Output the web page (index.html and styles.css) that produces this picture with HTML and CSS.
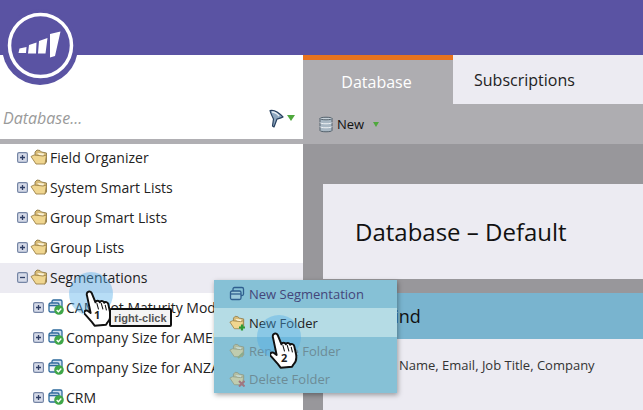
FILE: index.html
```html
<!DOCTYPE html>
<html lang="en">
  <head>
    <meta charset="utf-8" />
    <title>Database</title>
    <link rel="stylesheet" href="styles.css">
  </head>
  <body>
    <svg class="defs" width="0" height="0">
      <defs>
        <symbol id="plus" viewBox="0 0 11 11">
          <rect x=".6" y=".6" width="9.800" height="9.800" rx="1.500" fill="#d5dae8" stroke="#7585a5" stroke-width="1.200"/>
          <path d="M3 5.500h5M5.500 3v5" stroke="#2f3f66" stroke-width="1.300"/>
        </symbol>
        <symbol id="minus" viewBox="0 0 11 11">
          <rect x=".6" y=".6" width="9.800" height="9.800" rx="1.500" fill="#d5dae8" stroke="#7585a5" stroke-width="1.200"/>
          <path d="M3 5.500h5" stroke="#2f3f66" stroke-width="1.300"/>
        </symbol>
        <symbol id="folder" viewBox="0 0 18 16">
          <path d="M5 6V3l2-2 3 .5 1.500 1.500 5 1v9l-2 2z" fill="#d8bc78" stroke="#8f7a4a" stroke-width=".9"/>
          <path d="M7 4l7 .5-1 5z" fill="#fbf3d9"/>
          <path d="M1 7.500l3-1.500 9 1 3.500-1-1.500 9H6z" fill="#f0d690" stroke="#9c8248" stroke-width=".9" stroke-linejoin="round"/>
        </symbol>
        <symbol id="seg" viewBox="0 0 16 16">
          <rect x="4" y="1" width="10" height="8" rx="1.500" fill="#cfe0f0" stroke="#2d6a9c" stroke-width="1.300"/>
          <rect x="1" y="4" width="10" height="9" rx="1.500" fill="#eef4fa" stroke="#2d6a9c" stroke-width="1.300"/>
          <path d="M1 6.500h10" stroke="#2d6a9c" stroke-width="1.600"/>
          <circle cx="11" cy="11" r="4.800" fill="#3fa648"/>
          <path d="M8.700 11l1.700 1.700 2.900-3.200" fill="none" stroke="#fff" stroke-width="1.400"/>
        </symbol>
        <symbol id="hand" viewBox="0 0 34 42">
          <path d="M4 2.500c2-1.500 4-.5 5 1.500l4 10c.5-2.500 4-2.500 5 0 .5-2 4-2 5 .5 1-1.500 4-1 4.500 1.500l2 9c1 5 0 9-3 12l-1.500 2.500-13 1-3-4-8-9c-2-2.500 0-5 3-4l3.500 2.500L3.500 7c-.7-2-.5-3.500.5-4.500z" fill="#fff" stroke="#111" stroke-width="2.200" stroke-linejoin="round"/>
          <path d="M14.500 15l2 7M19.500 15l2 7M24 17l1.500 6" stroke="#111" stroke-width="1.200"/>
        </symbol>
      </defs>
    </svg>

    <header class="topbar"></header>

    <div class="columns">
      <aside class="sidebar">
        <div class="search">
          <span class="search-text">Database...</span>
          <svg class="funnel" width="15" height="19" viewBox="0 0 15 19">
            <path d="M1 1.500c4-1 8 1 13 6.500-3 1.500-5 1.500-6 2L5 18l-1.500-1 1-7C3 7 1.500 4 1 1.500z" fill="#8fa8c0" stroke="#27405f" stroke-width="1.200" stroke-linejoin="round"/>
            <path d="M3 3c3 0 5 1.500 7 4" fill="none" stroke="#e8eef4" stroke-width="1.300"/>
          </svg>
          <i class="arrow"></i>
        </div>
        <ul class="tree">
          <li class="row"><svg class="box"><use href="#plus"/></svg><svg class="folder"><use href="#folder"/></svg>Field Organizer</li>
          <li class="row"><svg class="box"><use href="#plus"/></svg><svg class="folder"><use href="#folder"/></svg>System Smart Lists</li>
          <li class="row"><svg class="box"><use href="#plus"/></svg><svg class="folder"><use href="#folder"/></svg>Group Smart Lists</li>
          <li class="row"><svg class="box"><use href="#plus"/></svg><svg class="folder"><use href="#folder"/></svg>Group Lists</li>
          <li class="row row-open"><svg class="box"><use href="#minus"/></svg><svg class="folder"><use href="#folder"/></svg>Segmentations</li>
          <li class="row row-sub"><svg class="box"><use href="#plus"/></svg><svg class="seg"><use href="#seg"/></svg>CAM Not Maturity Model</li>
          <li class="row row-sub"><svg class="box"><use href="#plus"/></svg><svg class="seg"><use href="#seg"/></svg>Company Size for AMER</li>
          <li class="row row-sub"><svg class="box"><use href="#plus"/></svg><svg class="seg"><use href="#seg"/></svg>Company Size for ANZA</li>
          <li class="row row-sub"><svg class="box"><use href="#plus"/></svg><svg class="seg"><use href="#seg"/></svg>CRM</li>
        </ul>
      </aside>

      <main class="content">
        <nav class="tabs">
          <span class="tab tab-active">Database</span>
          <span class="tab">Subscriptions</span>
        </nav>
        <div class="toolbar">
          <svg class="db" width="14" height="17" viewBox="0 0 14 17">
            <path d="M1 2.500C1 .8 13 .8 13 2.500v12c0 1.700-12 1.700-12 0z" fill="#a9b8c4" stroke="#56636e"/>
            <path d="M1 2.500c0 1.700 12 1.700 12 0" fill="#e4eaee" stroke="#56636e"/>
            <path d="M1 6.500c0 1.700 12 1.700 12 0M1 10.500c0 1.700 12 1.700 12 0" fill="none" stroke="#eef2f5"/>
          </svg>
          <span>New</span>
          <i class="arrow"></i>
        </div>
        <div class="page">
          <div class="title-card"><h1>Database – Default</h1></div>
          <div class="find">
            <h2>Find</h2>
            <p>Name, Email, Job Title, Company</p>
          </div>
        </div>
      </main>
    </div>

    <svg class="logo" width="84" height="85" viewBox="0 0 84 85">
      <circle cx="40" cy="47" r="38" fill="#5a53a3"/>
      <circle cx="40.500" cy="45.500" r="31" fill="none" stroke="#fff" stroke-width="3.500"/>
      <path d="M19.500 48.500l7-1.500-.5 6h-7.500zM29 45l7.500-2.500-.5 11h-8zM39 41l8.500-3-2 15.500H38zM50 34l10.500-2.500L55 56l-5 1.500z" fill="#fff"/>
    </svg>

    <ul class="menu">
      <li class="menu-item">
        <svg class="menu-icon" viewBox="0 0 16 16"><rect x="4" y="1.500" width="10.500" height="8" rx="1.500" fill="none" stroke="#2f5f8f" stroke-width="1.300"/><rect x="1.500" y="5" width="10.500" height="8.500" rx="1.500" fill="#9cc9db" stroke="#2f5f8f" stroke-width="1.300"/><path d="M1.500 8h10.500" stroke="#2f5f8f" stroke-width="1.300"/></svg>
        <span class="menu-purple">New Segmentation</span>
      </li>
      <li class="menu-item menu-hover">
        <svg class="menu-icon" viewBox="0 0 16 16"><use href="#folder" width="16" height="15"/><path d="M10 12.500h6M13 9.500v6" stroke="#2f9a35" stroke-width="2.200"/></svg>
        New Folder
      </li>
      <li class="menu-item menu-off">
        <svg class="menu-icon menu-faded" viewBox="0 0 16 16"><use href="#folder" width="16" height="15"/><path d="M9 15l5-5" stroke="#8d9a50" stroke-width="2"/></svg>
        Rename Folder
      </li>
      <li class="menu-item menu-off">
        <svg class="menu-icon menu-faded" viewBox="0 0 16 16"><use href="#folder" width="16" height="15"/><path d="M10 10l5.500 5.500M15.500 10L10 15.500" stroke="#b5393c" stroke-width="2"/></svg>
        Delete Folder
      </li>
    </ul>

    <span class="spot spot-one"></span>
    <span class="spot spot-two"></span>
    <svg class="hand hand-one"><use href="#hand"/></svg>
    <svg class="hand hand-two"><use href="#hand"/></svg>
    <span class="step step-one">1</span>
    <span class="step step-two">2</span>
    <span class="tip">right-click</span>
  </body>
</html>
```

FILE: styles.css
```css
* {
  margin: 0;
  padding: 0;
  box-sizing: border-box;
}

html,
body {
  width: 643px;
  height: 410px;
  overflow: hidden;
}

body {
  position: relative;
  font-family: "Open Sans", "Liberation Sans", sans-serif;
  background: #fff;
  color: #222;
}

ul {
  list-style: none;
}

.defs {
  position: absolute;
}

.topbar {
  height: 55px;
  background: #5a53a3;
}

.columns {
  display: grid;
  grid-template-columns: 303px 1fr;
  height: 355px;
}

/* left tree */
.sidebar {
  overflow: hidden;
  background: #fff;
}

.search {
  display: flex;
  align-items: center;
  height: 89px;
  padding: 42px 8px 0 3px;
  background: #fff;
  border-bottom: 5px solid #b0afb3;
}

.search-text {
  flex: 1;
  font-size: 16px;
  font-style: italic;
  color: #9a9a9a;
}

.funnel {
  margin-right: 3px;
}

.arrow {
  display: block;
  width: 0;
  height: 0;
  border-left: 4px solid transparent;
  border-right: 4px solid transparent;
  border-top: 6px solid #4fa83d;
}

.tree {
  margin-top: -1px;
}

.row {
  display: flex;
  align-items: center;
  height: 30px;
  padding: 0 0 2px 17px;
  font-size: 14px;
  white-space: nowrap;
  color: #222;
}

.row-open {
  background: #ecebf2;
}

.row-sub {
  padding-left: 33px;
}

.box {
  width: 11px;
  height: 11px;
  margin-right: 2px;
}

.folder {
  width: 18px;
  height: 16px;
  margin-right: 2px;
}

.seg {
  width: 16px;
  height: 16px;
  margin-right: 2px;
  margin-left: 2px;
}

/* right side */
.content {
  display: flex;
  flex-direction: column;
  overflow: hidden;
  background: #98979b;
}

.tabs {
  display: flex;
  flex-shrink: 0;
  height: 49px;
  background: #ecebf2;
}

.tab {
  display: flex;
  align-items: center;
  padding-left: 21px;
  font-size: 16px;
  color: #222;
}

.tab-active {
  justify-content: center;
  width: 150px;
  padding: 0 3px 0 0;
  background: #aeadb1;
  border-top: 5px solid #e8731f;
  color: #fff;
}

.toolbar {
  display: flex;
  flex-shrink: 0;
  align-items: center;
  gap: 4px;
  height: 40px;
  padding-left: 16px;
  background: #aeadb1;
  font-size: 13px;
  color: #111;
}

.toolbar .arrow {
  margin-left: 5px;
  border-left-width: 3px;
  border-right-width: 3px;
  border-top-width: 5px;
}

.page {
  flex: 1;
  padding: 40px 0 0 20px;
}

.title-card {
  display: flex;
  align-items: center;
  height: 95px;
  padding-left: 32px;
  background: #ecebf2;
}

.title-card h1 {
  font-size: 24px;
  font-weight: 400;
  color: #111;
}

.find {
  height: 120px;
  margin-top: 14px;
  background: #ecebf2;
}

.find h2 {
  height: 46px;
  padding-left: 62px;
  background: #79b4cf;
  font-size: 18px;
  font-weight: 400;
  line-height: 47px;
  color: #111;
}

.find p {
  padding: 17px 0 0 76px;
  font-size: 13px;
  color: #333;
}

/* things lying over the page */
.logo {
  position: absolute;
  left: 0;
  top: 0;
}

.menu {
  position: absolute;
  left: 214px;
  top: 280px;
  width: 183px;
  height: 113px;
  background: #86c1d6;
  box-shadow: 1px 2px 5px rgba(0, 0, 0, 0.35);
}

.menu-item {
  display: flex;
  align-items: center;
  gap: 4px;
  height: 28px;
  padding-left: 15px;
  font-size: 13px;
  color: #222;
}

.menu-hover {
  height: 29px;
  background: #b5dce5;
}

.menu-off {
  color: #6d8c96;
}

.menu-purple {
  color: #44467a;
}

.menu-icon {
  width: 16px;
  height: 16px;
}

.menu-faded {
  opacity: 0.55;
}

.spot {
  position: absolute;
  width: 44px;
  height: 44px;
  border-radius: 50%;
  background: rgba(74, 170, 232, 0.4);
}

.spot-one {
  left: 69px;
  top: 272px;
}

.spot-two {
  left: 257px;
  top: 315px;
}

.hand {
  position: absolute;
  width: 30px;
  height: 37px;
}

.hand-one {
  left: 84px;
  top: 290px;
}

.hand-two {
  left: 270px;
  top: 332px;
}

.step {
  position: absolute;
  font-size: 11px;
  font-weight: 700;
  color: #222;
}

.step-one {
  left: 94px;
  top: 307px;
}

.step-two {
  left: 281px;
  top: 350px;
}

.tip {
  position: absolute;
  left: 109px;
  top: 308px;
  padding: 1px 3px 0;
  background: #f4f4f4;
  border: 2px solid #111;
  border-radius: 2px;
  font-family: "Liberation Sans", sans-serif;
  font-size: 11px;
  font-weight: 700;
  line-height: 14px;
  color: #555;
}
```
